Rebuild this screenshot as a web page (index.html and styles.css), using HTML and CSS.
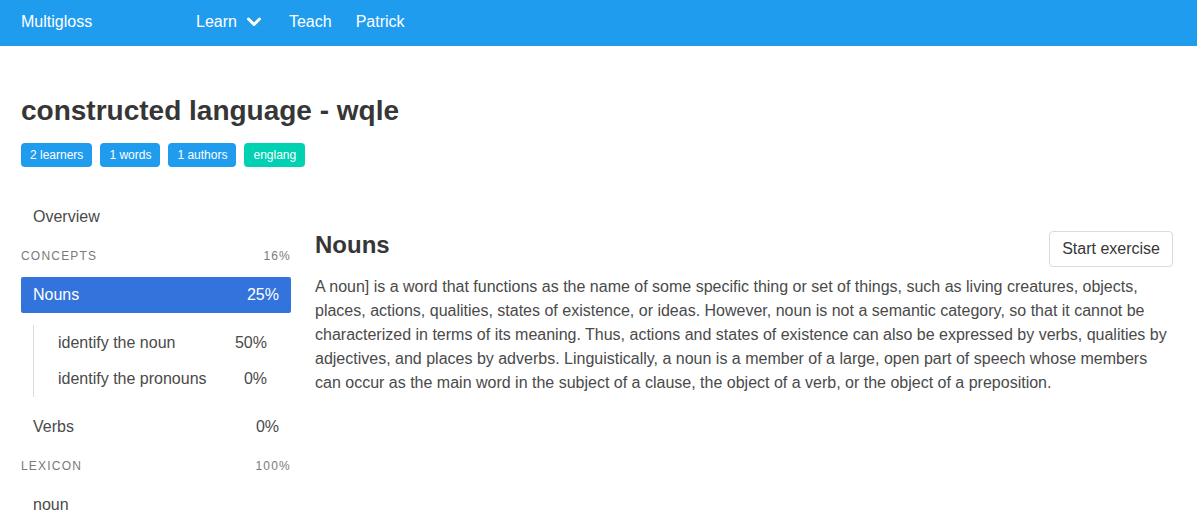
FILE: index.html
```html
<!DOCTYPE html>
<html lang="en">
<head>
<meta charset="utf-8">
<title>Multigloss</title>
<link rel="stylesheet" href="styles.css">
</head>
<body>
<nav class="navbar">
  <a class="brand">Multigloss</a>
  <div class="nav-menu">
    <a class="nav-item learn">Learn
      <svg class="chev" width="16" height="12" viewBox="0 0 16 12"><polyline points="2.5,3 8,8.5 13.5,3" fill="none" stroke="#fff" stroke-width="3" stroke-linecap="round" stroke-linejoin="round"/></svg>
    </a>
    <a class="nav-item teach">Teach</a>
    <a class="nav-item">Patrick</a>
  </div>
</nav>
<main class="page">
  <h1 class="title">constructed language - wqle</h1>
  <div class="tags">
    <span class="tag info">2 learners</span>
    <span class="tag info">1 words</span>
    <span class="tag info">1 authors</span>
    <span class="tag primary">englang</span>
  </div>
  <div class="columns">
    <aside class="menu">
      <ul class="menu-list">
        <li><a class="menu-link">Overview</a></li>
      </ul>
      <p class="menu-label"><span>Concepts</span><span>16%</span></p>
      <ul class="menu-list">
        <li>
          <a class="menu-link active"><span>Nouns</span><span>25%</span></a>
          <ul class="sub-list">
            <li><a class="menu-link"><span>identify the noun</span><span>50%</span></a></li>
            <li><a class="menu-link"><span>identify the pronouns</span><span>0%</span></a></li>
          </ul>
        </li>
        <li><a class="menu-link"><span>Verbs</span><span>0%</span></a></li>
      </ul>
      <p class="menu-label"><span>Lexicon</span><span>100%</span></p>
      <ul class="menu-list">
        <li><a class="menu-link">noun</a></li>
      </ul>
    </aside>
    <section class="content">
      <div class="content-head">
        <h2 class="subtitle">Nouns</h2>
        <button class="button">Start exercise</button>
      </div>
      <p class="desc">A noun] is a word that functions as the name of some specific thing or set of things, such as living creatures, objects, places, actions, qualities, states of existence, or ideas. However, noun is not a semantic category, so that it cannot be characterized in terms of its meaning. Thus, actions and states of existence can also be expressed by verbs, qualities by adjectives, and places by adverbs. Linguistically, a noun is a member of a large, open part of speech whose members can occur as the main word in the subject of a clause, the object of a verb, or the object of a preposition.</p>
    </section>
  </div>
</main>
</body>
</html>
```

FILE: styles.css
```css
* { box-sizing: border-box; }
html, body { margin: 0; padding: 0; }
body {
  font-family: "Liberation Sans", Arial, sans-serif;
  font-size: 16px;
  line-height: 1.5;
  color: #4a4a4a;
  background: #fff;
}
ul { list-style: none; margin: 0; padding: 0; }
p, h1, h2 { margin: 0; }

.navbar {
  height: 46px;
  background: #209cee;
  display: flex;
  align-items: center;
  padding: 0 0 2px 21px;
  color: #fff;
}
.brand { color: #fff; width: 175px; }
.nav-menu { display: flex; align-items: center; }
.nav-item { color: #fff; display: flex; align-items: center; }
.learn { margin-right: 27px; }
.teach { margin-right: 24px; }
.chev { margin-left: 9px; }

.page { padding: 49px 24px 0 21px; }
.title {
  font-size: 28px;
  font-weight: 700;
  line-height: 1.125;
  color: #363636;
}
.tags { display: flex; gap: 8px; margin-top: 16px; }
.tag {
  height: 24px;
  line-height: 24px;
  font-size: 12px;
  padding: 0 9px;
  border-radius: 4px;
  color: #fff;
}
.tag.info { background: #209cee; }
.tag.primary { background: #00d1b2; }

.columns { display: flex; gap: 24px; margin-top: 32px; }
.menu { width: 270px; flex: none; }
.menu-link {
  display: flex;
  justify-content: space-between;
  padding: 6px 12px;
  border-radius: 2px;
  color: #4a4a4a;
}
.menu-link.active { background: #3273dc; color: #fff; }
.menu-label {
  display: flex;
  justify-content: space-between;
  font-size: 12px;
  letter-spacing: 0.1em;
  text-transform: uppercase;
  color: #7a7a7a;
  margin: 12px 0;
}
.sub-list {
  margin: 12px;
  padding-left: 12px;
  border-left: 1px solid #dbdbdb;
}

.content { flex: 1; padding-top: 32px; }
.content-head { display: flex; justify-content: space-between; align-items: flex-start; }
.subtitle {
  font-size: 24px;
  font-weight: 700;
  line-height: 1.125;
  color: #363636;
}
.button {
  font-family: inherit;
  font-size: 16px;
  line-height: 1.5;
  height: 36px;
  padding: 5px 12px;
  border: 1px solid #dbdbdb;
  border-radius: 4px;
  background: #fff;
  color: #363636;
}
.desc { margin-top: 8px; }
```
